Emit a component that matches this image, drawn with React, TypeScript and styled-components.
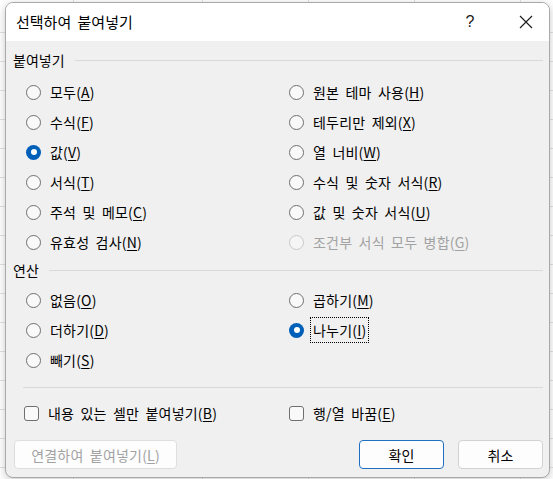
import React from 'react';
import styled, {createGlobalStyle, css} from 'styled-components';

const GlobalStyle = createGlobalStyle`
   html, body {
      margin: 0;
      padding: 0;
   }
   body {
      width: 553px;
      height: 479px;
      overflow: hidden;
      font-family: 'Noto Sans CJK KR', 'Noto Sans', sans-serif;
      background-color: #ffffff;
      background-image:
         repeating-linear-gradient(to bottom, transparent 0 28px, #e2e2e2 28px 29px),
         repeating-linear-gradient(to right, transparent 0 105px, #e2e2e2 105px 106px);
      background-position: 0 4px, 97px 0;
   }
`;

const Window = styled.div`
   margin: 2px 0 0 5px;
   width: 545px;
   height: 476px;
   box-sizing: border-box;
   border: 1px solid #a9a9a9;
   border-radius: 8px;
   overflow: hidden;
   display: flex;
   flex-direction: column;
   box-shadow: 0 2px 8px rgba(0, 0, 0, 0.22);
   background: #f0f0f0;
   color: #000;
   word-spacing: 3px;
`;

const TitleBar = styled.div`
   height: 38px;
   flex: 0 0 auto;
   background: #ffffff;
   display: flex;
   align-items: center;
   padding-left: 10px;
`;

const Title = styled.h1`
   margin: 0;
   font-size: 15px;
   font-weight: 400;
   flex: 1 1 auto;
   padding-bottom: 2px;
`;

const TitleButton = styled.span<{$ml?: number}>`
   width: 46px;
   height: 38px;
   margin-left: ${p => p.$ml ?? 0}px;
   display: inline-flex;
   align-items: center;
   justify-content: center;
   font-size: 16px;
   font-family: 'Liberation Sans', sans-serif;
   color: #1a1a1a;
`;

const Body = styled.div`
   flex: 1 1 auto;
   padding: 9px 6px 0 7px;
   display: flex;
   flex-direction: column;
`;

const SectionHeader = styled.div<{$mt?: number}>`
   height: 20px;
   display: flex;
   align-items: center;
   gap: 10px;
   margin-top: ${p => p.$mt ?? 0}px;
   font-size: 14px;
   span {
      line-height: 20px;
   }
   &::after {
      content: '';
      flex: 1 1 auto;
      height: 1px;
      background: #d9d9d9;
   }
`;

const OptionGrid = styled.div<{$mt: number; $rows: string}>`
   display: grid;
   grid-template-columns: 263px 1fr;
   grid-auto-flow: column;
   grid-template-rows: ${p => p.$rows};
   margin-top: ${p => p.$mt}px;
   padding-left: 13px;
`;

const Option = styled.label<{$disabled?: boolean}>`
   display: flex;
   align-items: center;
   gap: 9px;
   font-size: 14px;
   letter-spacing: 0.2px;
   color: ${p => (p.$disabled ? '#a2a2a2' : '#000')};
`;

const RadioMark = styled.span<{$checked?: boolean; $disabled?: boolean}>`
   width: 15px;
   height: 15px;
   box-sizing: border-box;
   border-radius: 50%;
   flex: 0 0 auto;
   position: relative;
   border: 1px solid ${p => (p.$disabled ? '#c9c9c9' : '#6f6f6f')};
   background: ${p => (p.$disabled ? '#f5f5f5' : '#f9f9f9')};
   ${p =>
      p.$checked &&
      css`
         border: none;
         background: #005fb8;
         &::after {
            content: '';
            position: absolute;
            left: 4.5px;
            top: 4.5px;
            width: 6px;
            height: 6px;
            border-radius: 50%;
            background: #ffffff;
         }
      `}
`;

const CheckMark = styled.span`
   width: 15px;
   height: 15px;
   box-sizing: border-box;
   border-radius: 3px;
   border: 1px solid #6f6f6f;
   background: #f9f9f9;
   flex: 0 0 auto;
`;

const OptionText = styled.span<{$focused?: boolean}>`
   line-height: 20px;
   padding: 2px 2px;
   margin-left: -3px;
   border: 1px dotted ${p => (p.$focused ? '#000' : 'transparent')};
   u {
      text-underline-offset: 2px;
      text-decoration-thickness: 1px;
   }
`;

const Separator = styled.div`
   height: 1px;
   background: #d9d9d9;
   margin: 12px 0 0 10px;
`;

const CheckRow = styled.div`
   height: 24px;
   margin-top: 12px;
   padding-left: 11px;
   display: grid;
   grid-template-columns: 265px 1fr;
`;

const ButtonRow = styled.div`
   display: flex;
   margin-top: 16px;
   padding-left: 1px;
   gap: 14px;
`;

const Button = styled.button<{$primary?: boolean; $width: number}>`
   width: ${p => p.$width}px;
   height: 29px;
   box-sizing: border-box;
   border-radius: 4px;
   background: #fdfdfd;
   border: 1px solid ${p => (p.$primary ? '#1f6fc0' : '#d2d2d2')};
   font-family: 'Noto Sans CJK KR', 'Noto Sans', sans-serif;
   font-size: 14px;
   word-spacing: 3px;
   letter-spacing: 0.2px;
   color: #000;
   padding: 0;
   &:disabled {
      color: #a2a2a2;
      border-color: #dedede;
   }
   u {
      text-underline-offset: 2px;
   }
`;

const Spacer = styled.div`
   flex: 1 1 auto;
`;

type Item = {text: string; key: string; checked?: boolean; disabled?: boolean; focused?: boolean};

const pasteItems: Item[] = [
   {text: '모두', key: 'A'},
   {text: '수식', key: 'F'},
   {text: '값', key: 'V', checked: true},
   {text: '서식', key: 'T'},
   {text: '주석 및 메모', key: 'C'},
   {text: '유효성 검사', key: 'N'},
   {text: '원본 테마 사용', key: 'H'},
   {text: '테두리만 제외', key: 'X'},
   {text: '열 너비', key: 'W'},
   {text: '수식 및 숫자 서식', key: 'R'},
   {text: '값 및 숫자 서식', key: 'U'},
   {text: '조건부 서식 모두 병합', key: 'G', disabled: true},
];

const opItems: (Item | null)[] = [
   {text: '없음', key: 'O'},
   {text: '더하기', key: 'D'},
   {text: '빼기', key: 'S'},
   {text: '곱하기', key: 'M'},
   {text: '나누기', key: 'I', checked: true, focused: true},
   null,
];

const Label = ({text, k}: {text: string; k: string}) => (
   <>
      {text}(<u>{k}</u>)
   </>
);

const RadioOption = ({item}: {item: Item}) => (
   <Option $disabled={item.disabled}>
      <RadioMark $checked={item.checked} $disabled={item.disabled} />
      <OptionText $focused={item.focused}>
         <Label text={item.text} k={item.key} />
      </OptionText>
   </Option>
);

const CloseIcon = () => (
   <svg width='14' height='14' viewBox='0 0 14 14'>
      <path d='M1 1 L13 13 M13 1 L1 13' stroke='#1a1a1a' strokeWidth='1.1' fill='none' />
   </svg>
);

const App = () => {
   return (
      <>
         <GlobalStyle />
         <Window>
            <TitleBar>
               <Title>선택하여 붙여넣기</Title>
               <TitleButton>?</TitleButton>
               <TitleButton $ml={10}>
                  <CloseIcon />
               </TitleButton>
            </TitleBar>
            <Body>
               <SectionHeader>
                  <span>붙여넣기</span>
               </SectionHeader>
               <OptionGrid $mt={7} $rows='repeat(6, 30px)'>
                  {pasteItems.map(item => (
                     <RadioOption key={item.key} item={item} />
                  ))}
               </OptionGrid>
               <SectionHeader $mt={3}>
                  <span>연산</span>
               </SectionHeader>
               <OptionGrid $mt={5} $rows='repeat(3, 30px)'>
                  {opItems.map((item, i) =>
                     item ? <RadioOption key={item.key} item={item} /> : <div key={i} />,
                  )}
               </OptionGrid>
               <Separator />
               <CheckRow>
                  <Option>
                     <CheckMark />
                     <OptionText>
                        <Label text='내용 있는 셀만 붙여넣기' k='B' />
                     </OptionText>
                  </Option>
                  <Option>
                     <CheckMark />
                     <OptionText>
                        <Label text='행/열 바꿈' k='E' />
                     </OptionText>
                  </Option>
               </CheckRow>
               <ButtonRow>
                  <Button $width={163} disabled>
                     <Label text='연결하여 붙여넣기' k='L' />
                  </Button>
                  <Spacer />
                  <Button $width={85} $primary>
                     확인
                  </Button>
                  <Button $width={85}>취소</Button>
               </ButtonRow>
            </Body>
         </Window>
      </>
   );
};

export default App;
